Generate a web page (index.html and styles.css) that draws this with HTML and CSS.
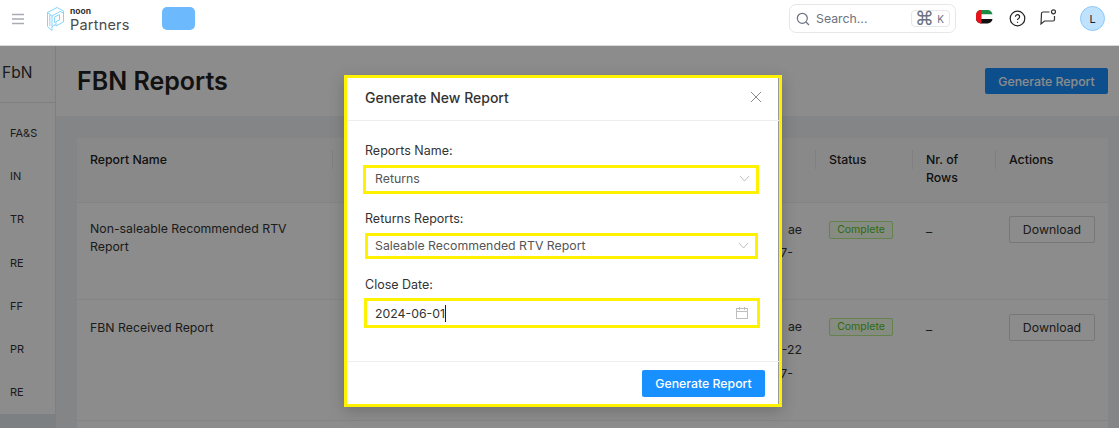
FILE: index.html
```html
<!DOCTYPE html>
<html lang="en">
<head>
<meta charset="utf-8">
<title>FBN Reports</title>
<link rel="stylesheet" href="styles.css">
</head>
<body>
<header class="topbar">
  <div class="brand">
    <svg class="menu-icon" width="14" height="12" viewBox="0 0 14 12"><path d="M1 1.500h12M1 6h12M1 10.500h12" stroke="#a8abb3" stroke-width="1.400" fill="none"/></svg>
    <svg class="logo-mark" width="17" height="24" viewBox="0 0 17 24" fill="none" stroke="#86d4fb" stroke-width="1"><path d="M.5 5.500 10 .5l6.500 3.500v11L9 19v-3.500"/><path d="M.5 5.500V19.500L5 23.500V19.500"/><path d="M.5 5.500 5 9v10.500l4-2"/><path d="M5 9l8-4.500 3.500 1.500"/><path d="M2.800 7.200V19M7.500 10l5-2.500v5.500l-5 2.500z"/></svg>
    <div class="wordmark"><span class="wordmark-noon">noon</span><span class="wordmark-name">Partners</span></div>
    <div class="store-chip"></div>
  </div>
  <div class="top-actions">
    <div class="search">
      <svg width="14" height="14" viewBox="0 0 14 14" fill="none" stroke="#6b7280" stroke-width="1.200"><circle cx="6.300" cy="6.300" r="5"/><path d="m10 10 3 3"/></svg>
      <span class="search-text">Search...</span>
      <span class="kbd"><span class="kbd-cmd">⌘</span><span class="kbd-k">K</span></span>
    </div>
    <svg class="flag" width="17" height="14" viewBox="0 0 17 14"><defs><clipPath id="flagclip"><rect x="0" y="0" width="16.500" height="13.500" rx="5"/></clipPath></defs><g clip-path="url(#flagclip)"><rect width="17" height="4.500" fill="#1c8a43"/><rect y="4.500" width="17" height="4.500" fill="#fff"/><rect y="9" width="17" height="5" fill="#111"/><rect width="5.500" height="14" fill="#e8141c"/></g></svg>
    <svg class="help" width="17" height="17" viewBox="0 0 17 17" fill="none" stroke="#222" stroke-width="1.200"><circle cx="8.500" cy="8.500" r="7.300"/><path d="M6.400 6.700a2.100 2.100 0 1 1 3.200 1.800c-.7.400-1.100.8-1.100 1.600"/><path d="M8.500 11.800v1"/></svg>
    <svg class="chat" width="17" height="17" viewBox="0 0 17 17" fill="none" stroke="#333" stroke-width="1.200"><path d="M9.500 3H3a1.500 1.500 0 0 0-1.500 1.500L1 15l3.500-3H13a1.500 1.500 0 0 0 1.500-1.500V7"/><circle cx="13.500" cy="2.800" r="2"/></svg>
    <div class="avatar">L</div>
  </div>
</header>

<div class="shell">
  <nav class="sidebar">
    <div class="side-title">FbN</div>
    <ul class="side-list">
      <li>FA&amp;S</li><li>IN</li><li>TR</li><li>RE</li><li>FF</li><li>PR</li><li>RE</li>
    </ul>
    <div class="side-active"></div>
  </nav>
  <main class="content">
    <div class="page-head">
      <h1>FBN Reports</h1>
      <button class="btn-primary page-btn">Generate Report</button>
    </div>
    <div class="card">
      <table class="reports">
        <colgroup><col class="c-name"><col class="c-mid"><col class="c-status"><col class="c-rows"><col class="c-act"></colgroup>
        <thead>
          <tr><th>Report Name</th><th></th><th>Status</th><th>Nr. of Rows</th><th>Actions</th></tr>
        </thead>
        <tbody>
          <tr class="row-a">
            <td>Non-saleable Recommended RTV Report</td>
            <td class="mid"><div>ae</div><div class="short">27-</div></td>
            <td><span class="tag">Complete</span></td>
            <td class="dash">–</td>
            <td><button class="btn-outline">Download</button></td>
          </tr>
          <tr class="row-b">
            <td>FBN Received Report</td>
            <td class="mid"><div>ae</div><div>7-22</div><div class="short">27-</div></td>
            <td><span class="tag">Complete</span></td>
            <td class="dash">–</td>
            <td><button class="btn-outline">Download</button></td>
          </tr>
        </tbody>
      </table>
    </div>
  </main>
</div>

<div class="overlay">
  <section class="modal">
    <div class="modal-head">
      <h2>Generate New Report</h2>
      <svg width="12" height="12" viewBox="0 0 12 12" fill="none" stroke="#8a8a8a" stroke-width="1"><path d="m1 1 10 10M11 1 1 11"/></svg>
    </div>
    <div class="modal-body">
      <label class="field-label">Reports Name:</label>
      <div class="hl hl-one"><span>Returns</span><svg width="11" height="7" viewBox="0 0 11 7" fill="none" stroke="#bfbfbf"><path d="m1 1 4.500 5L10 1"/></svg></div>
      <label class="field-label">Returns Reports:</label>
      <div class="hl hl-two"><span>Saleable Recommended RTV Report</span><svg width="11" height="7" viewBox="0 0 11 7" fill="none" stroke="#bfbfbf"><path d="m1 1 4.500 5L10 1"/></svg></div>
      <label class="field-label">Close Date:</label>
      <div class="hl hl-three"><span class="date">2024-06-01</span><svg width="12" height="12" viewBox="0 0 12 12" fill="none" stroke="#bfbfbf"><rect x=".5" y="1.500" width="11" height="10"/><path d="M.5 4.500h11M3.500 0v3M8.500 0v3"/></svg></div>
    </div>
    <div class="modal-foot"><button class="btn-primary foot-btn">Generate Report</button></div>
  </section>
</div>
</body>
</html>
```

FILE: styles.css
```css
* { box-sizing: border-box; }
html, body { margin: 0; height: 428px; overflow: hidden; }
body { font-family: Inter, "Liberation Sans", sans-serif; font-size: 12.300px; color: #333; background: #f0f2f5; position: relative; }
button { font-family: inherit; }

.topbar { height: 46px; background: #fff; border-bottom: 1px solid #d9d9d9; display: flex; justify-content: space-between; padding-left: 11px; padding-right: 14px; }
.brand { display: flex; align-items: flex-start; }
.menu-icon { margin-top: 13px; }
.logo-mark { margin-left: 22px; margin-top: 7px; }
.wordmark { display: flex; flex-direction: column; margin-left: 6px; margin-top: 6px; color: #4a4a4a; }
.wordmark-noon { font-size: 8.500px; line-height: 10px; font-weight: 700; color: #333; }
.wordmark-name { font-size: 14.500px; line-height: 15px; margin-top: 1px; letter-spacing: .2px; }
.store-chip { width: 33px; height: 23px; border-radius: 5px; background: #6cb9fe; margin-left: 32px; margin-top: 7px; }

.top-actions { display: flex; align-items: flex-start; }
.search { width: 167px; height: 29px; margin-top: 4px; border: 1px solid #e5e7eb; border-radius: 7px; display: flex; align-items: center; padding-left: 6px; }
.search-text { margin-left: 6px; color: #6b7280; font-size: 12.300px; }
.kbd { margin-left: auto; margin-right: 5px; width: 39px; height: 17px; border: 1px solid #e5e7eb; border-radius: 4px; display: flex; align-items: center; justify-content: space-between; padding: 0 5px 0 3px; color: #6b7280; }
.kbd-cmd { font-family: "DejaVu Sans", sans-serif; font-size: 19px; line-height: 15px; }
.kbd-k { font-size: 10px; }
.flag { margin-left: 20px; margin-top: 10px; }
.help { margin-left: 16px; margin-top: 10px; }
.chat { margin-left: 14px; margin-top: 9px; }
.avatar { width: 25px; height: 25px; margin-left: 23px; margin-top: 6px; border-radius: 50%; background: #bfe3ff; border: 1px solid #8cc8fb; display: flex; align-items: center; justify-content: center; font-size: 11px; color: #222; }

.shell { display: flex; height: 382px; }
.sidebar { width: 56px; background: #fff; border-right: 1px solid #e8e8e8; display: flex; flex-direction: column; }
.side-title { height: 57px; padding: 17px 0 0 2px; font-size: 15.500px; border-bottom: 1px solid #e8e8e8; color: #333; }
.side-list { list-style: none; margin: 0; padding: 0 0 0 10px; font-size: 11px; height: 311px; color: #333; }
.side-list li { height: 43.200px; padding-top: 23px; line-height: 14px; }
.side-active { flex: 1; background: #e4e9ef; }

.content { flex: 1; display: flex; flex-direction: column; }
.page-head { height: 70px; background: #fff; display: flex; justify-content: space-between; align-items: flex-start; padding: 0 11px 0 21px; }
.page-head h1 { margin: 17px 0 0; font-size: 25px; line-height: 36px; font-weight: 600; color: #222; }
.btn-primary { background: #1890ff; color: #fff; border: 0; border-radius: 2px; font-size: 12.300px; font-weight: 500; }
.page-btn { width: 123px; height: 26px; margin-top: 22px; }
.card { flex: 1; margin: 22px 11px 0 21px; background: #fff; }
.reports { width: 100%; border-collapse: collapse; table-layout: fixed; font-size: 12.300px; }
.c-name { width: 255px; }
.c-mid { width: 483px; }
.c-status { width: 97px; }
.c-rows { width: 83px; }
.c-act { width: 113px; }
.reports th { height: 64px; background: #fafafa; text-align: left; font-weight: 500; padding: 13px 14px 0 13px; vertical-align: top; line-height: 18px; border-bottom: 1px solid #f0f0f0; color: #222; position: relative; }
.reports th + th { padding-left: 14px; }
.reports th + th::before { content: ""; position: absolute; left: 0; top: 12px; height: 19px; border-left: 1px solid #e8e8e8; }
.reports td { vertical-align: top; padding: 17px 14px 0; line-height: 18px; border-bottom: 1px solid #f0f0f0; color: #333; }
.reports td:first-child { padding-left: 13px; }
.row-a td { height: 97px; }
.row-b td { height: 121px; }
.row-b td:first-child { padding-top: 19px; }
.reports td.mid { text-align: right; padding-right: 13px; line-height: 23px; padding-top: 15px; }
.reports .row-b td.mid { line-height: 23.500px; }
.short { margin-right: 9px; }
.tag { display: inline-block; height: 18px; width: 64px; border: 1px solid #b7eb8f; background: #f6ffed; color: #52c41a; font-size: 10.500px; line-height: 16px; border-radius: 2px; text-align: center; }
.row-b .tag { margin-top: 1px; }
.reports td.dash { color: #333; padding-top: 20px; }
.reports .row-b td.dash { padding-top: 21px; }
.btn-outline { width: 86px; height: 27px; background: #fff; border: 1px solid #d9d9d9; border-radius: 2px; color: #333; font-size: 12.300px; margin-top: -3px; }
.row-a .btn-outline { margin-top: -4px; }

.overlay { position: absolute; left: 0; top: 46px; right: 0; bottom: 0; background: rgba(0,0,0,.45); padding: 29px 0 0 344px; }
.modal { width: 438px; height: 332px; background: #fff; border: 3px solid #fff200; display: flex; flex-direction: column; box-shadow: 0 4px 14px rgba(0,0,0,.2), inset -1px 0 0 #999; }
.modal-head { height: 43px; flex: none; border-bottom: 1px solid #eee; display: flex; justify-content: space-between; align-items: center; padding: 0 17px 4px 18px; }
.modal-head h2 { margin: 0; font-size: 14px; font-weight: 500; color: #333; }
.modal-body { flex: 1; padding: 21px 0 0 18px; position: relative; }
.field-label { display: block; line-height: 18px; font-size: 12.500px; color: #333; }
.hl { border: 3px solid #fff200; display: flex; justify-content: space-between; align-items: center; padding: 0 6px 3px 9px; font-size: 12.300px; color: #555; }
.hl-one { width: 396px; height: 29px; margin: 5px 0 16px -2px; }
.hl-two { width: 393px; height: 26px; margin: 5px 0 17px 0; padding-left: 7px; padding-bottom: 2px; }
.hl-three { width: 396px; height: 30px; margin: 4px 0 0 -1px; padding-left: 8px; padding-bottom: 0; padding-right: 9px; }
.date { color: #333; border-right: 1px solid #222; line-height: 17px; }
.modal-foot { height: 43px; flex: none; border-top: 1px solid #eee; display: flex; justify-content: flex-end; padding: 8px 14px 0 0; }
.foot-btn { width: 123px; height: 27px; }
```
